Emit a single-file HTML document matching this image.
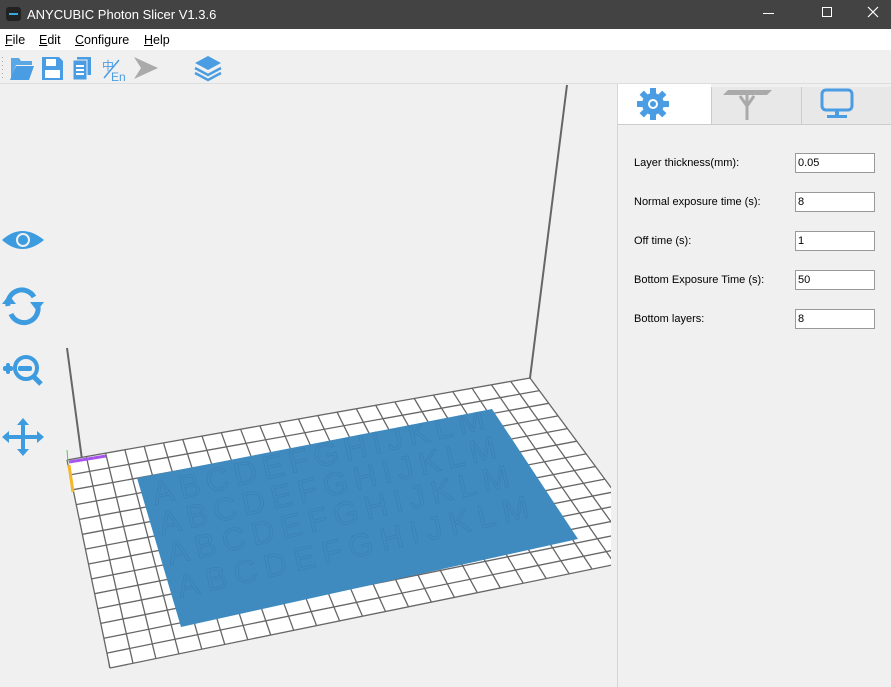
<!DOCTYPE html>
<html><head><meta charset="utf-8"><style>
*{margin:0;padding:0;box-sizing:border-box}
body{width:891px;height:687px;overflow:hidden;background:#f0f0f0;font-family:"Liberation Sans",sans-serif;position:relative}
.title{position:absolute;left:0;top:0;width:891px;height:29px;background:#434343;color:#fff;font-size:13px}
.menu{position:absolute;top:29px;left:0;width:891px;height:21px;background:#fff;font-size:12.5px}
.menu span{position:absolute;top:4px}
.tb{position:absolute;top:51px;left:0;width:891px;height:33px;background:#f0f0f0;border-bottom:1px solid #ddd}
.panel{position:absolute;left:617px;top:84px;width:274px;height:603px;background:#f0f0f0;border-left:1px solid #d6d6d6}
.lbl{position:absolute;left:634px;font-size:11px;color:#000}
.inp{position:absolute;left:795px;width:80px;height:20px;background:#fff;border:1px solid #999;font-size:11px;padding:3px 0 0 2px}
</style></head><body>
<div class="title">
<div style="position:absolute;left:6px;top:7px;width:15px;height:14px;background:#222;border-radius:3px"><div style="position:absolute;left:3px;top:6px;width:9px;height:2px;background:#3ad"></div></div>
<span style="position:absolute;left:27px;top:7px">ANYCUBIC Photon Slicer V1.3.6</span>
<span style="position:absolute;left:763px;top:13px;width:11px;height:1px;background:#fff"></span>
<span style="position:absolute;left:822px;top:7px;width:10px;height:10px;border:1px solid #fff"></span>
<svg width="12" height="12" style="position:absolute;left:867px;top:6px"><path d="M1 1L11 11M11 1L1 11" stroke="#fff" stroke-width="1.2"/></svg>
</div>
<div class="menu">
<span style="left:5px"><u>F</u>ile</span><span style="left:39px"><u>E</u>dit</span><span style="left:75px"><u>C</u>onfigure</span><span style="left:144px"><u>H</u>elp</span>
</div>
<div class="tb">
<svg width="240" height="33" style="position:absolute;left:0;top:0">
<g fill="#aaa"><rect x="2" y="6" width="1" height="1"/><rect x="2" y="10" width="1" height="1"/><rect x="2" y="14" width="1" height="1"/><rect x="2" y="18" width="1" height="1"/><rect x="2" y="22" width="1" height="1"/><rect x="2" y="26" width="1" height="1"/></g>
<path d="M11 7h8l2 3h11v4H16l-5 14z" fill="#5aa7e6"/><path d="M16 15h18l-5 14H10z" fill="#4a9de3"/>
<path d="M42 6h17l4 4v19H42z" fill="#4a9de3"/><rect x="46" y="8" width="10" height="7" fill="#fff"/><rect x="45" y="19" width="15" height="8" fill="#fff"/>
<rect x="77" y="6" width="14" height="18" fill="#4a9de3"/><rect x="73" y="9" width="14" height="20" fill="#4a9de3" stroke="#f0f0f0"/><g fill="#fff"><rect x="76" y="14" width="8" height="2"/><rect x="76" y="18" width="8" height="2"/><rect x="76" y="22" width="8" height="2"/></g>
<text x="102" y="19" font-size="12" fill="#4a9de3" font-family="Noto Sans CJK SC,sans-serif">中</text><text x="111" y="30" font-size="12" fill="#4a9de3">En</text><path d="M104 27L119 9" stroke="#4a9de3" stroke-width="1.5"/>
<path d="M134 6l24 11-24 11 7-11z" fill="#aaa"/>
<path d="M208 5l13 7-13 7-13-7z" fill="#4a9de3"/><path d="M195 17l13 7 13-7" stroke="#4a9de3" stroke-width="2.5" fill="none"/><path d="M195 22l13 7 13-7" stroke="#4a9de3" stroke-width="2.5" fill="none"/>
</svg>
</div>
<svg width="617" height="603" viewBox="0 84 617 603" style="position:absolute;left:0;top:84px">
<defs><clipPath id="pl"><path d="M137 478L492 409L578 539L181 627z"/></clipPath></defs>
<path d="M567 85L530 378M67 348L110 668" stroke="#666" stroke-width="2" fill="none"/>
<path d="M67 460L530 378L661 555L110 668z" fill="#fff"/>
<g stroke="#666" stroke-width="1.3" fill="none">
<path d="M67 460L110 668M86.3 456.6L133 663.3M105.6 453.2L155.9 658.6M124.9 449.8L178.9 653.9M144.2 446.3L201.8 649.2M163.5 442.9L224.8 644.5M182.8 439.5L247.8 639.8M202 436.1L270.7 635M221.3 432.7L293.7 630.3M240.6 429.3L316.6 625.6M259.9 425.8L339.6 620.9M279.2 422.4L362.5 616.2M298.5 419L385.5 611.5M317.8 415.6L408.5 606.8M337.1 412.2L431.4 602.1M356.4 408.8L454.4 597.4M375.7 405.3L477.3 592.7M394.9 401.9L500.3 588M414.3 398.5L523.3 583.3M433.5 395.1L546.2 578.5M452.8 391.7L569.2 573.8M472.1 388.3L592.1 569.1M491.4 384.8L615.1 564.4M510.7 381.4L638 559.7M530 378L661 555"/>
<path d="M67 460L530 378M70.1 474.9L539.4 390.6M73.1 489.7L548.7 403.3M76.2 504.6L558.1 415.9M79.3 519.4L567.4 428.6M82.4 534.3L576.8 441.2M85.4 549.1L586.1 453.9M88.5 564L595.5 466.5M91.6 578.9L604.9 479.1M94.6 593.7L614.2 491.8M97.7 608.6L623.6 504.4M100.8 623.4L632.9 517.1M103.9 638.3L642.3 529.7M106.9 653.1L651.6 542.4M110 668L661 555"/>
</g>
<path d="M137 478L492 409L578 539L181 627z" fill="#3f8bc0"/>
<g clip-path="url(#pl)" font-size="32" fill="none" stroke="#3a7fb2" stroke-width="0.7" font-family="Liberation Sans">
<text x="155" y="505" transform="rotate(-13 155 505)" textLength="340">ABCDEFGHIJKLM</text>
<text x="162" y="535" transform="rotate(-13 162 535)" textLength="345">ABCDEFGHIJKLM</text>
<text x="170" y="565" transform="rotate(-13 170 565)" textLength="350">ABCDEFGHIJKLM</text>
<text x="180" y="598" transform="rotate(-13 180 598)" textLength="360">ABCDEFGHIJKLM</text>
</g>
<path d="M69 462L106 456" stroke="#a855f0" stroke-width="3"/><path d="M69 465L73 492" stroke="#f4b62a" stroke-width="3"/><path d="M67 450L68 462" stroke="#5c5" stroke-width="1"/>
<rect x="611" y="84" width="6" height="603" fill="#f0f0f0"/>
<g fill="#3d9be0">
<path d="M2 240Q22 222 44 240Q22 258 2 240z"/><circle cx="23" cy="240" r="7" fill="#f0f0f0"/><circle cx="23" cy="240" r="5"/>
<path d="M8 306A14 14 0 0 1 34 297" stroke="#3d9be0" stroke-width="5" fill="none"/><path d="M37 303A14 14 0 0 1 11 314" stroke="#3d9be0" stroke-width="5" fill="none"/>
<path d="M2 304l7-9 7 9z"/><path d="M30 302l7 9 7-9z"/>
<circle cx="26" cy="368" r="11" stroke="#3d9be0" stroke-width="4" fill="none"/><path d="M33 376l8 8" stroke="#3d9be0" stroke-width="5"/>
<rect x="3" y="366" width="10" height="5" rx="2"/><rect x="6" y="363" width="4" height="11" rx="2"/><rect x="18" y="366" width="14" height="5" rx="2"/>
<rect x="21" y="423" width="4" height="28"/><rect x="8" y="435" width="30" height="4"/>
<path d="M23 418l6 7h-12zM23 456l6-7h-12zM2 437l7-6v12zM44 437l-7-6v12z"/>
</g>
</svg>
<div class="panel">
<div style="position:absolute;left:0;top:0;width:93px;height:40px;background:#fff"></div>
<div style="position:absolute;left:93px;top:3px;width:90px;height:37px;background:#e8e8e8;border-left:1px solid #ccc"></div>
<div style="position:absolute;left:183px;top:3px;width:91px;height:37px;background:#e8e8e8;border-left:1px solid #ccc"></div>
<div style="position:absolute;left:0;top:40px;width:274px;height:1px;background:#ccc"></div>
<svg width="274" height="40" style="position:absolute;left:0;top:0">
<g transform="translate(35 20)" fill="#4a9de3"><circle r="11"/><g><rect x="-3" y="-16" width="6" height="32"/><rect x="-16" y="-3" width="32" height="6"/><rect x="-3" y="-16" width="6" height="32" transform="rotate(45)"/><rect x="-3" y="-16" width="6" height="32" transform="rotate(-45)"/></g><circle r="5" fill="#fff"/><circle r="3"/></g>
<path d="M110 6h44l-5 5h-44z" fill="#aaa"/><path d="M129 11v25M122 12l7 10 7-10" stroke="#aaa" stroke-width="3" fill="none"/>
<rect x="204" y="6" width="30" height="20" rx="4" stroke="#4a9de3" stroke-width="3" fill="none"/><rect x="217" y="26" width="4" height="6" fill="#4a9de3"/><rect x="209" y="31" width="20" height="3" fill="#4a9de3"/>
</svg>
</div>
<div class="lbl" style="top:157px">Layer thickness(mm):</div><div class="inp" style="top:153px">0.05</div>
<div class="lbl" style="top:196px">Normal exposure time (s):</div><div class="inp" style="top:192px">8</div>
<div class="lbl" style="top:235px">Off time (s):</div><div class="inp" style="top:231px">1</div>
<div class="lbl" style="top:274px">Bottom Exposure Time (s):</div><div class="inp" style="top:270px">50</div>
<div class="lbl" style="top:313px">Bottom layers:</div><div class="inp" style="top:309px">8</div>
</body></html>
